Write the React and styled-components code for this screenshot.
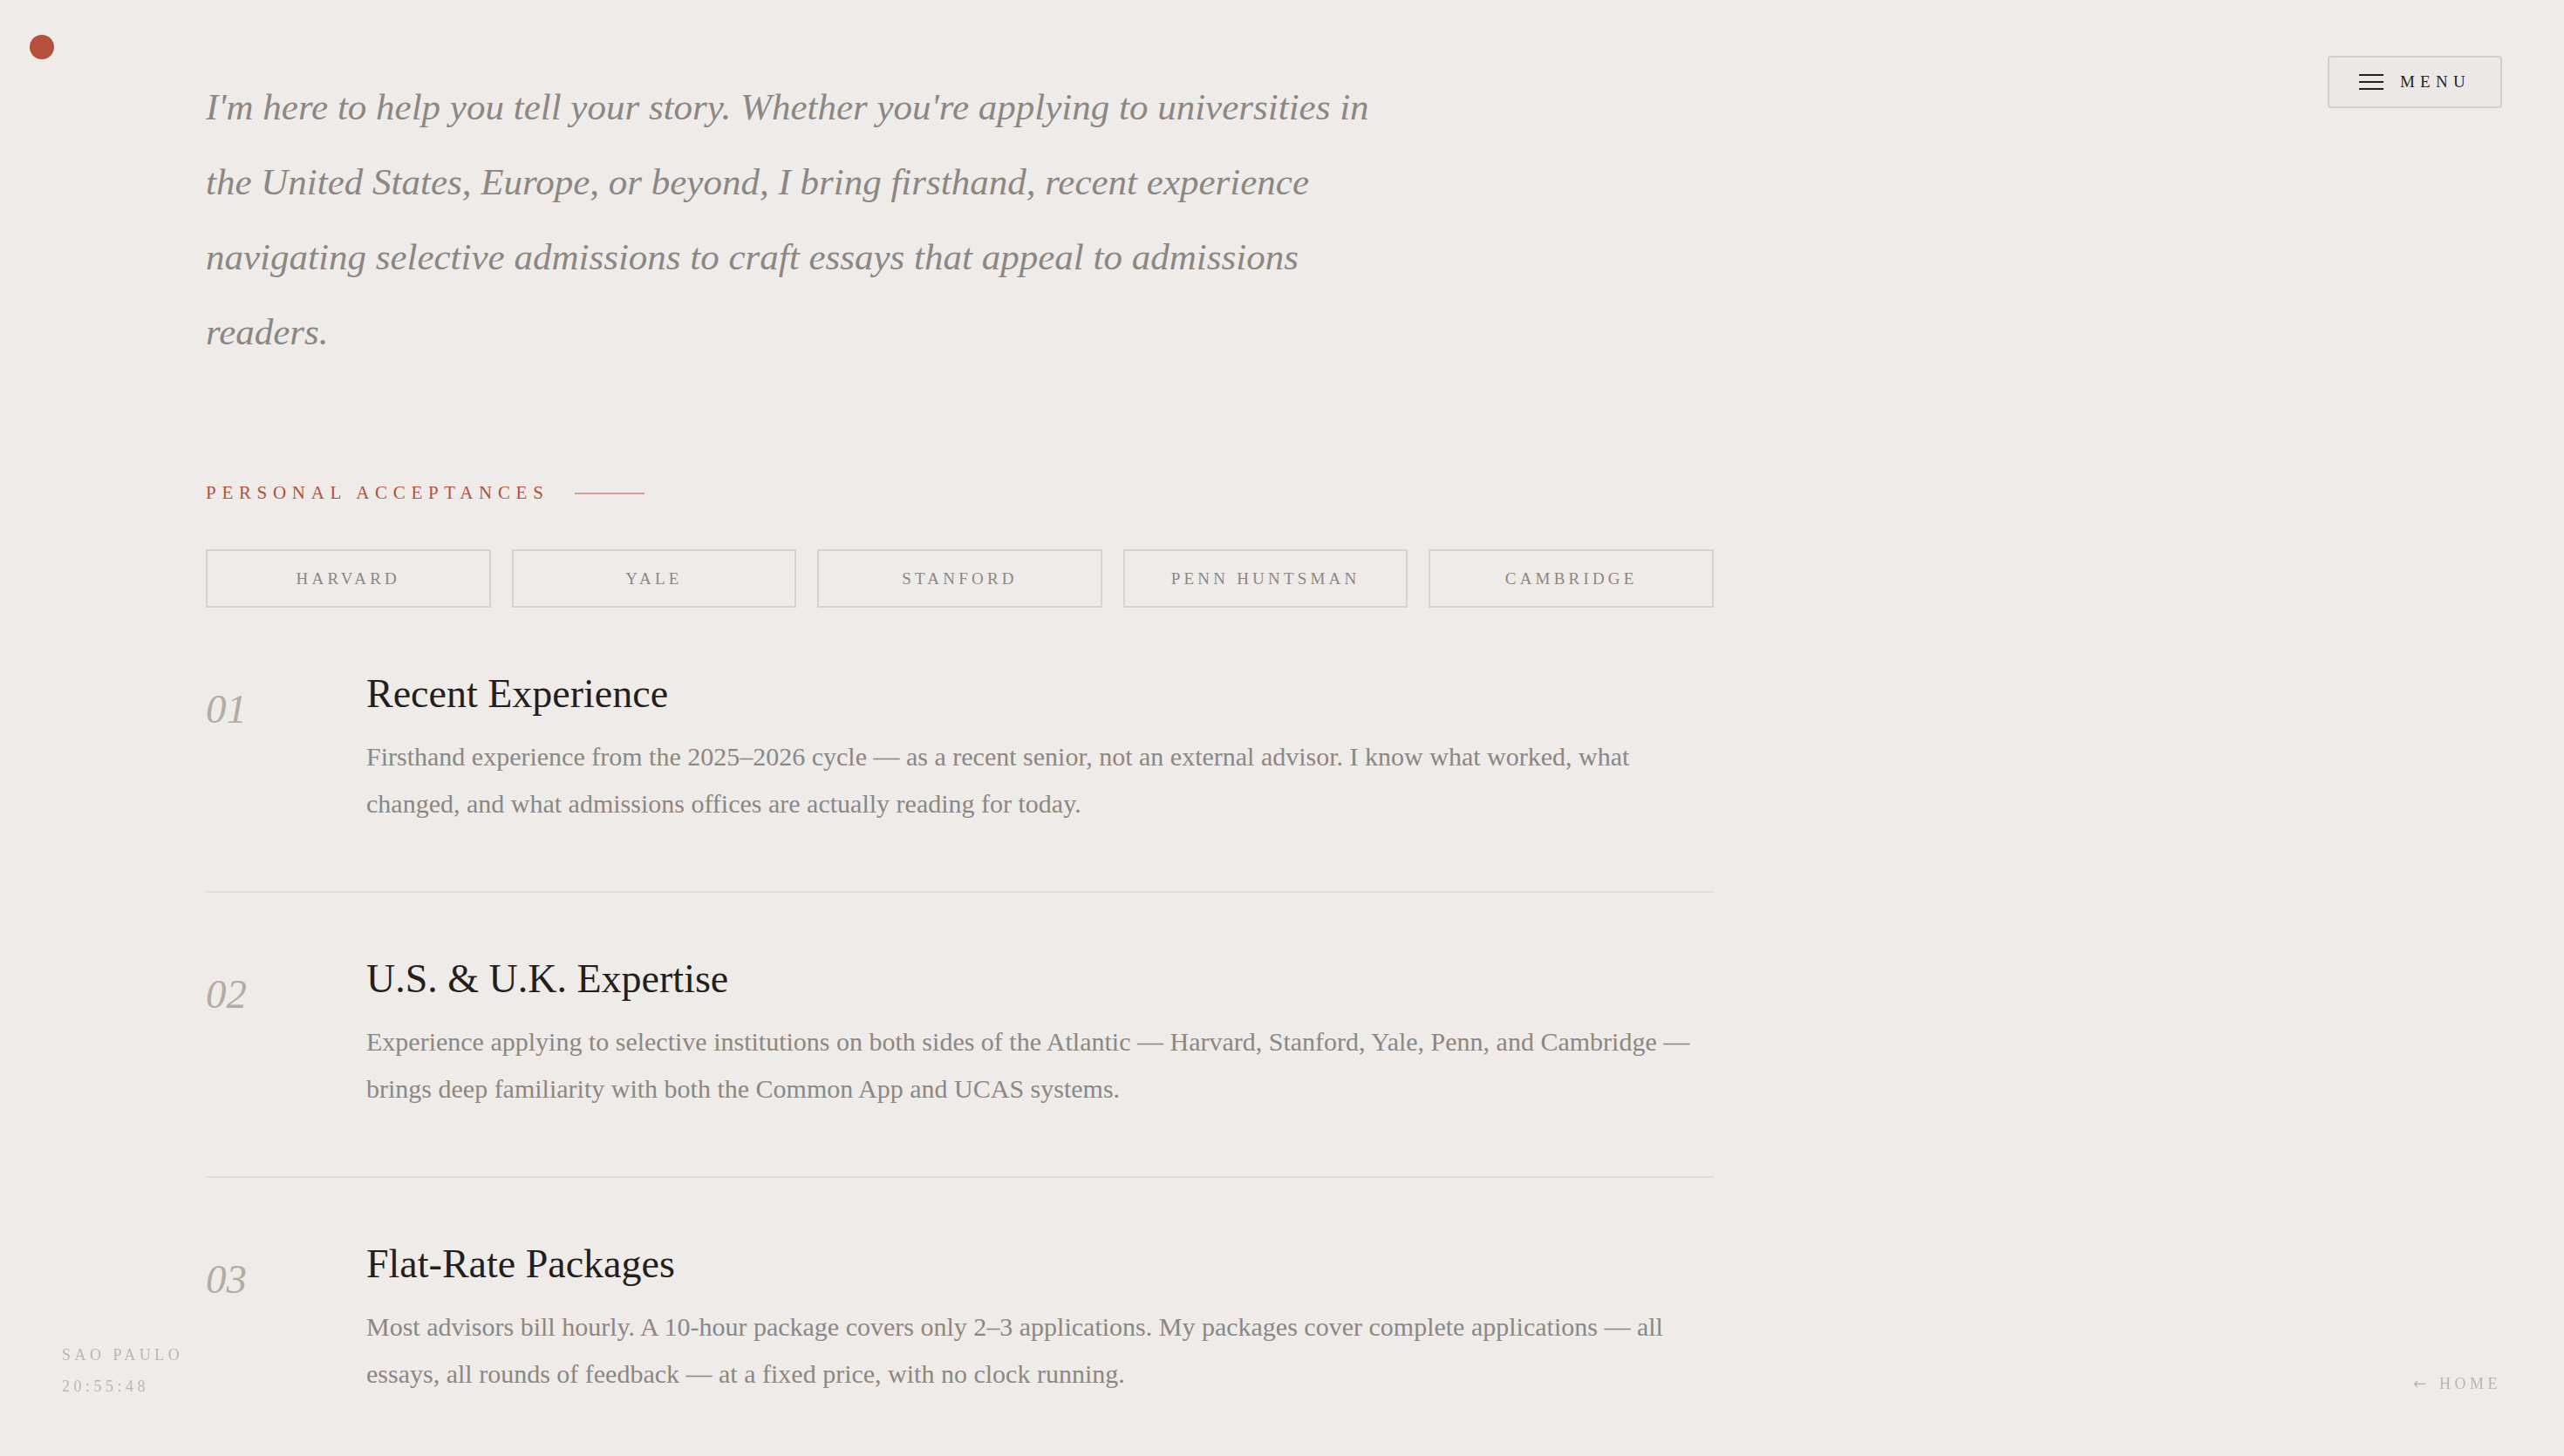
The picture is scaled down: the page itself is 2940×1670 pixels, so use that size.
import React from 'react';
import styled, { createGlobalStyle } from 'styled-components';

const GlobalStyle = createGlobalStyle`
    html, body {
        margin: 0;
        padding: 0;
        overflow: hidden;
        background: #eeebe8;
    }
    body {
        font-family: "Liberation Serif", "Times New Roman", serif;
        -webkit-font-smoothing: antialiased;
    }
`;

const Page = styled.div`
    min-height: 100vh;
    background: #eeebe8;
`;

const Dot = styled.span`
    position: fixed;
    top: 40px;
    left: 34px;
    width: 28px;
    height: 28px;
    border-radius: 50%;
    background: #b4503b;
`;

const MenuButton = styled.button`
    position: fixed;
    top: 64px;
    right: 71px;
    width: 200px;
    height: 60px;
    box-sizing: border-box;
    display: flex;
    align-items: center;
    justify-content: center;
    gap: 19px;
    padding: 0;
    border: 2px solid #d4cfc9;
    border-radius: 4px;
    background: #ebe8e5;
    color: #241f1c;
    font-family: "Liberation Serif", serif;
    font-size: 19px;
    letter-spacing: 6.3px;
    cursor: pointer;
`;

const Main = styled.main`
    width: 1729px;
    padding: 80px 0 0 236px;
`;

const Quote = styled.p`
    margin: 0;
    max-width: 1375px;
    font-style: italic;
    font-size: 43px;
    line-height: 86px;
    color: #8c8783;
`;

const Label = styled.div`
    display: flex;
    align-items: center;
    gap: 29px;
    margin-top: 131px;
    font-size: 21px;
    line-height: 21px;
    letter-spacing: 6.7px;
    color: #b4503b;
`;

const LabelRule = styled.span`
    width: 80px;
    height: 2px;
    background: #d49d90;
`;

const Chips = styled.div`
    display: grid;
    grid-template-columns: repeat(5, 1fr);
    gap: 24px;
    margin-top: 54px;
`;

const Chip = styled.div`
    height: 67px;
    box-sizing: border-box;
    display: flex;
    align-items: center;
    justify-content: center;
    border: 2px solid #d8d3cd;
    font-size: 19px;
    letter-spacing: 4.2px;
    color: #8c8783;
`;

const Item = styled.section`
    display: grid;
    grid-template-columns: 184px 1fr;
    align-items: start;
    padding: 71px 0 73px;
    border-bottom: 2px solid #e1ddd9;
`;

const Num = styled.div`
    padding-top: 22px;
    font-style: italic;
    font-size: 47px;
    line-height: 47px;
    color: #b3aca5;
`;

const Title = styled.h3`
    margin: 0;
    font-weight: 400;
    font-size: 46px;
    line-height: 56px;
    color: #241f1c;
`;

const Desc = styled.p`
    margin: 17px 0 0;
    font-size: 30px;
    line-height: 54px;
    color: #8c8783;
`;

const Corner = styled.div`
    position: fixed;
    bottom: ${(p) => p.$bottom}px;
    ${(p) => (p.$right ? 'right: 72px;' : 'left: 71px;')}
    display: flex;
    flex-direction: ${(p) => (p.$right ? 'row' : 'column')};
    align-items: ${(p) => (p.$right ? 'center' : 'flex-start')};
    gap: ${(p) => (p.$right ? '15px' : '0')};
    font-size: 18px;
    line-height: 36px;
    letter-spacing: 4.5px;
    color: #bbb5ae;
`;

const Arrow = styled.span`
    font-family: "DejaVu Sans", sans-serif;
    font-size: 18px;
    letter-spacing: 0;
`;

function Burger() {
    return (
        <svg width="28" height="18" viewBox="0 0 28 18" fill="none">
            <path d="M0 1h28M0 9h28M0 17h28" stroke="#241f1c" strokeWidth="2" />
        </svg>
    );
}

const schools = ['HARVARD', 'YALE', 'STANFORD', 'PENN HUNTSMAN', 'CAMBRIDGE'];

const items = [
    {
        n: '01',
        title: 'Recent Experience',
        text: 'Firsthand experience from the 2025–2026 cycle — as a recent senior, not an external advisor. I know what worked, what changed, and what admissions offices are actually reading for today.',
    },
    {
        n: '02',
        title: 'U.S. & U.K. Expertise',
        text: 'Experience applying to selective institutions on both sides of the Atlantic — Harvard, Stanford, Yale, Penn, and Cambridge — brings deep familiarity with both the Common App and UCAS systems.',
    },
    {
        n: '03',
        title: 'Flat-Rate Packages',
        text: 'Most advisors bill hourly. A 10-hour package covers only 2–3 applications. My packages cover complete applications — all essays, all rounds of feedback — at a fixed price, with no clock running.',
    },
];

export default function App() {
    return (
        <Page>
            <GlobalStyle />
            <Dot />
            <MenuButton>
                <Burger />
                <span>MENU</span>
            </MenuButton>
            <Main>
                <Quote>
                    I'm here to help you tell your story. Whether you're applying to universities in the United States, Europe, or beyond, I bring firsthand, recent experience navigating selective admissions to craft essays that appeal to admissions readers.
                </Quote>
                <Label>
                    <span>PERSONAL ACCEPTANCES</span>
                    <LabelRule />
                </Label>
                <Chips>
                    {schools.map((s) => (
                        <Chip key={s}>{s}</Chip>
                    ))}
                </Chips>
                {items.map((it) => (
                    <Item key={it.n}>
                        <Num>{it.n}</Num>
                        <div>
                            <Title>{it.title}</Title>
                            <Desc>{it.text}</Desc>
                        </div>
                    </Item>
                ))}
            </Main>
            <Corner $bottom={62}>
                <span>SAO PAULO</span>
                <span>20:55:48</span>
            </Corner>
            <Corner $right $bottom={65}>
                <Arrow>←</Arrow>
                <span>HOME</span>
            </Corner>
        </Page>
    );
}
